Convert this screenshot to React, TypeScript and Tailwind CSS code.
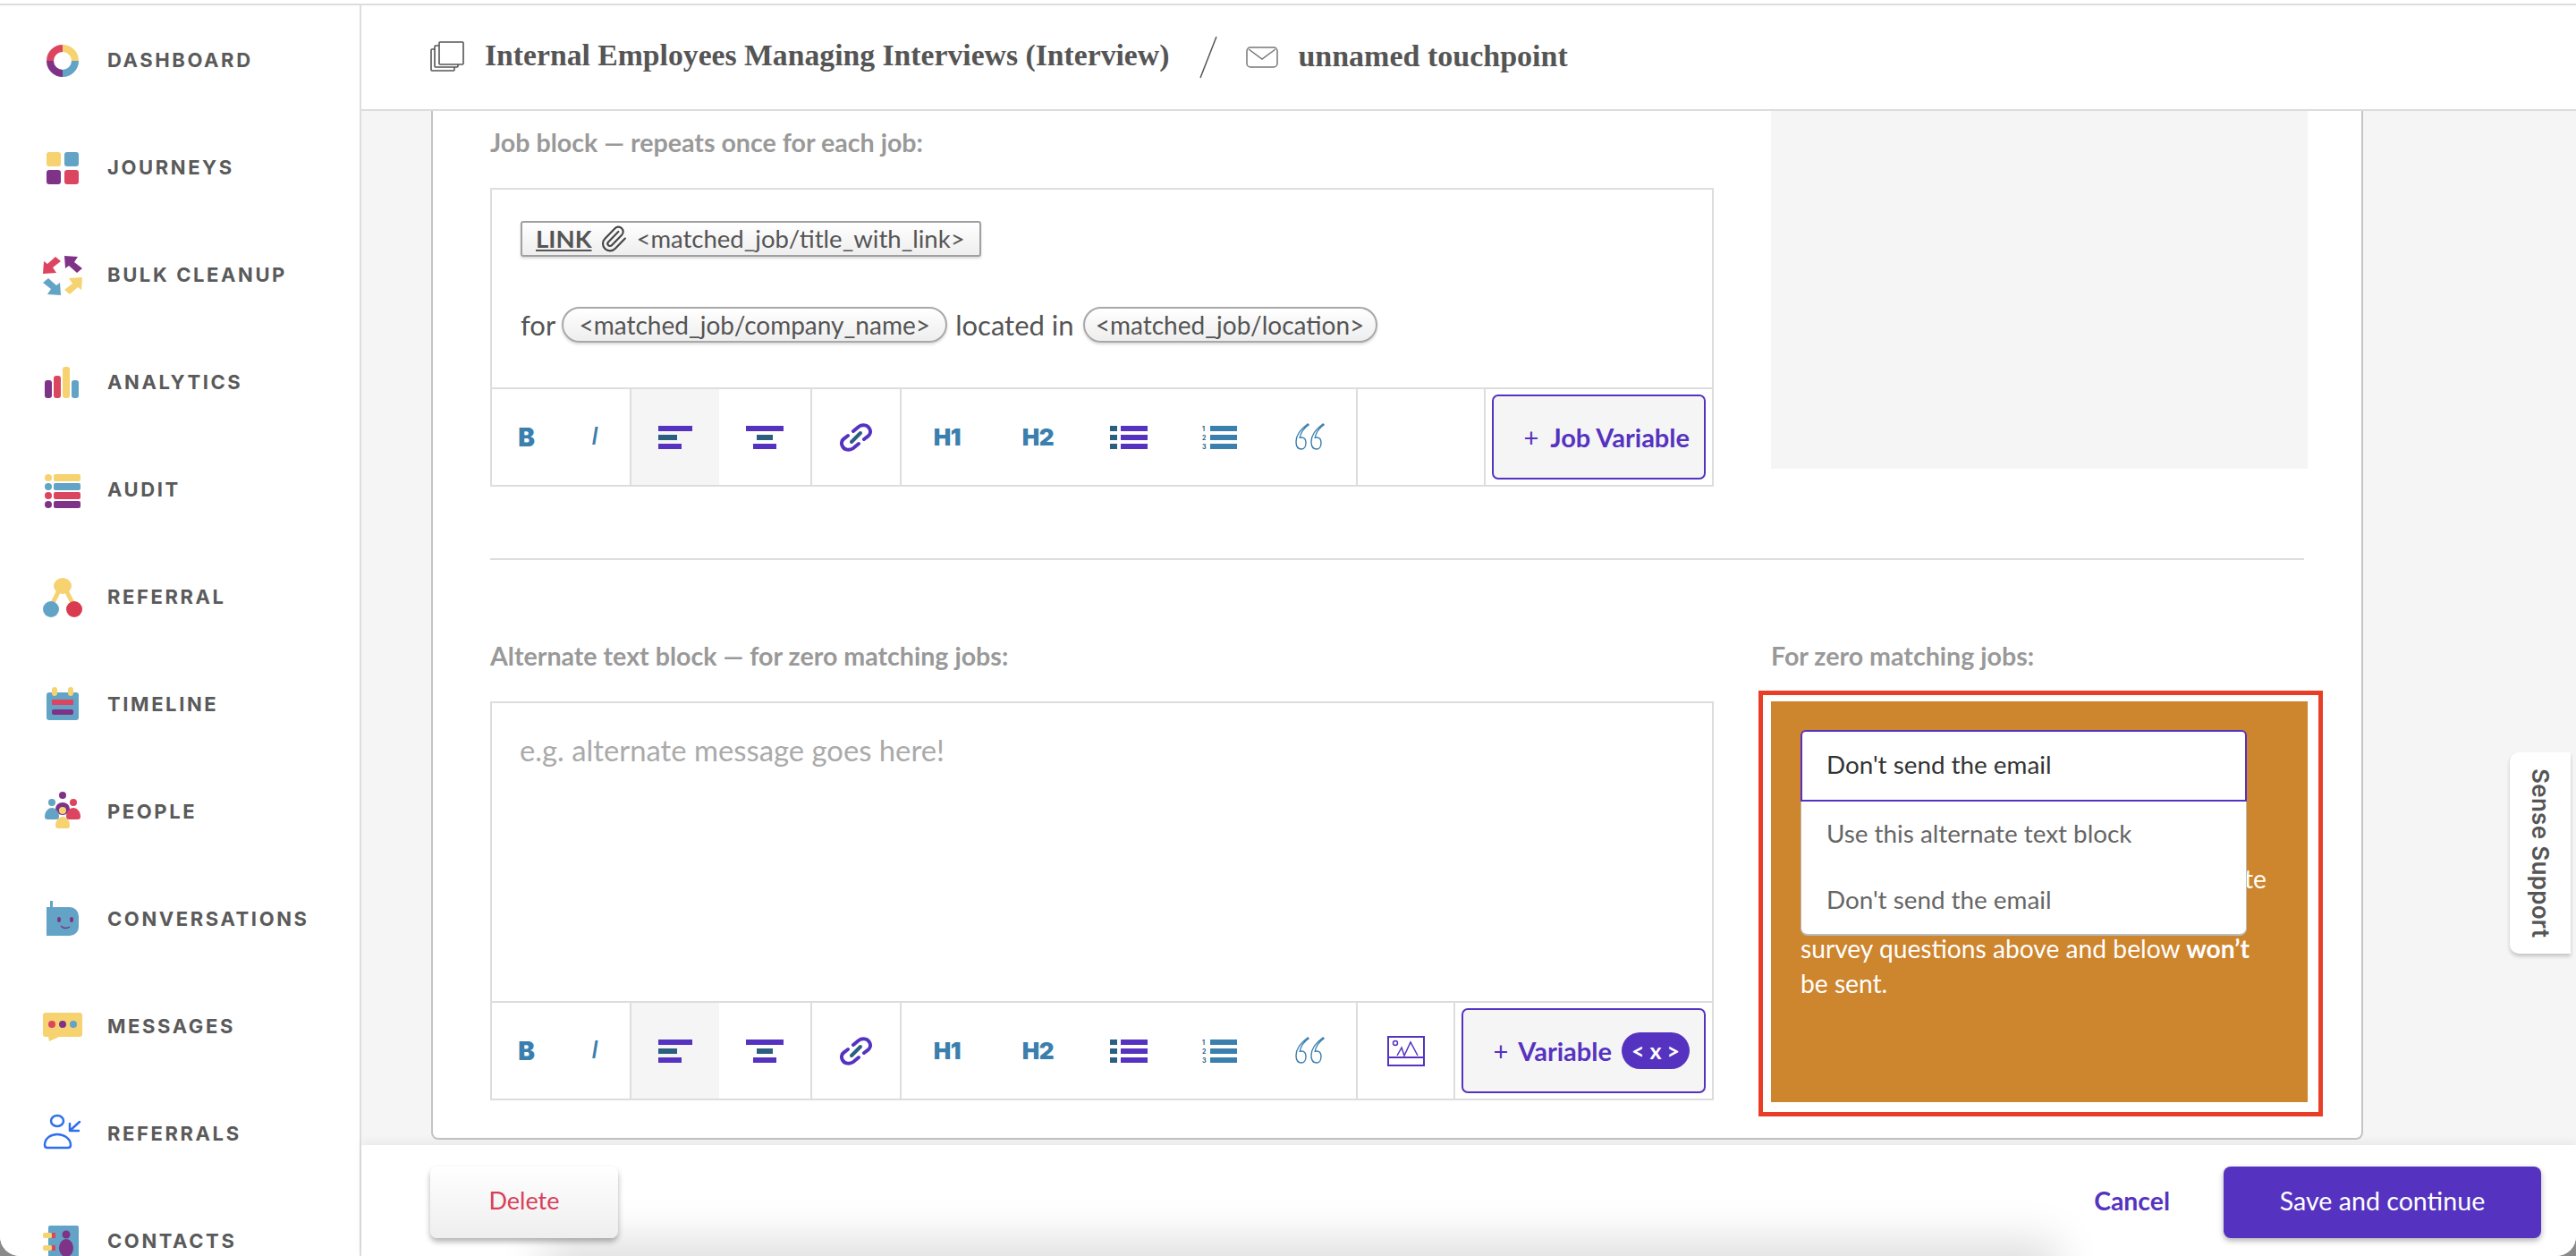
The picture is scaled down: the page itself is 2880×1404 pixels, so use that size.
import { Paperclip } from "lucide-react";
import type { ReactNode } from "react";

const yellow = "#f6d270";
const blue = "#62a3c6";
const purple = "#7f3386";
const red = "#dc4560";

const arrow = "0,20 1,6 5,9 14,1 20,6 11,13 15,19";

const navItems: { label: string; icon: ReactNode }[] = [
  {
    label: "DASHBOARD",
    icon: (
      <g fill="none" strokeWidth="8">
        <path d="M24 12 A14 14 0 0 1 38 26" stroke={yellow} />
        <path d="M38 26 A14 14 0 0 1 24 40" stroke={blue} />
        <path d="M24 40 A14 14 0 0 1 10 26" stroke={purple} />
        <path d="M10 26 A14 14 0 0 1 24 12" stroke={red} />
      </g>
    ),
  },
  {
    label: "JOURNEYS",
    icon: (
      <g>
        <rect x="6" y="8" width="16" height="16" rx="3" fill={yellow} />
        <rect x="26" y="8" width="16" height="16" rx="3" fill={blue} />
        <rect x="6" y="28" width="16" height="16" rx="3" fill={purple} />
        <rect x="26" y="28" width="16" height="16" rx="3" fill={red} />
      </g>
    ),
  },
  {
    label: "BULK CLEANUP",
    icon: (
      <g>
        <polygon points={arrow} fill={red} transform="translate(2 4)" />
        <polygon points={arrow} fill={purple} transform="translate(26 24) scale(1 -1)" />
        <polygon points={arrow} fill={blue} transform="translate(22 28) scale(-1 1)" />
        <polygon points={arrow} fill={yellow} transform="translate(46 48) scale(-1 -1)" />
      </g>
    ),
  },
  {
    label: "ANALYTICS",
    icon: (
      <g>
        <rect x="4" y="23" width="8" height="20" rx="3" fill={purple} />
        <rect x="14" y="18" width="8" height="25" rx="3" fill={red} />
        <rect x="24" y="8" width="8" height="35" rx="3" fill={yellow} />
        <rect x="34" y="23" width="8" height="20" rx="3" fill={blue} />
      </g>
    ),
  },
  {
    label: "AUDIT",
    icon: (
      <g>
        {[yellow, blue, red, purple].map((c, i) => (
          <g key={c} fill={c}>
            <ellipse cx="8" cy={12 + i * 10} rx="4" ry="4" />
            <rect x="14" y={8 + i * 10} width="30" height="8" rx="2" />
          </g>
        ))}
      </g>
    ),
  },
  {
    label: "REFERRAL",
    icon: (
      <g>
        <path d="M20 18 L13 32 M28 18 L35 32" stroke={yellow} strokeWidth="5" />
        <ellipse cx="24" cy="13" rx="10" ry="9" fill={yellow} />
        <ellipse cx="11" cy="39" rx="9" ry="9" fill={blue} />
        <ellipse cx="37" cy="39" rx="9" ry="9" fill="#d93a4e" />
      </g>
    ),
  },
  {
    label: "TIMELINE",
    icon: (
      <g>
        <rect x="6" y="12" width="36" height="31" rx="3" fill={blue} />
        <rect x="12" y="6" width="6" height="10" rx="3" fill={yellow} />
        <rect x="30" y="6" width="6" height="10" rx="3" fill={yellow} />
        <rect x="12" y="20" width="24" height="6" rx="1" fill={red} />
        <rect x="12" y="31" width="24" height="6" rx="2" fill={purple} />
      </g>
    ),
  },
  {
    label: "PEOPLE",
    icon: (
      <g>
        <circle cx="24" cy="7" r="4" fill={purple} />
        <circle cx="12" cy="15" r="4" fill={blue} />
        <circle cx="36" cy="15" r="4" fill={red} />
        <ellipse cx="24" cy="22" rx="8" ry="7" fill={purple} />
        <path d="M4 31 C4 24 9 21 12 21 C15 21 20 24 20 31 C20 33 19 34 17 34 H7 C5 34 4 33 4 31 Z" fill={blue} />
        <path d="M28 31 C28 24 33 21 36 21 C39 21 44 24 44 31 C44 33 43 34 41 34 H31 C29 34 28 33 28 31 Z" fill={red} />
        <circle cx="24" cy="24" r="4" fill={yellow} />
        <path d="M16 41 C16 34 21 31 24 31 C27 31 32 34 32 41 C32 43 31 44 29 44 H19 C17 44 16 43 16 41 Z" fill={yellow} />
      </g>
    ),
  },
  {
    label: "CONVERSATIONS",
    icon: (
      <g>
        <rect x="10" y="5" width="3" height="8" fill={blue} />
        <path d="M6 12 H32 a10 10 0 0 1 10 10 V34 a10 10 0 0 1 -10 10 H6 Z" fill={blue} />
        <ellipse cx="20" cy="26" rx="2" ry="3" fill={purple} />
        <ellipse cx="34" cy="26" rx="2" ry="3" fill={purple} />
        <path d="M22 33 C25 36 29 36 32 34" stroke={purple} strokeWidth="1.5" fill="none" />
      </g>
    ),
  },
  {
    label: "MESSAGES",
    icon: (
      <g>
        <path d="M5 10 H43 a3 3 0 0 1 3 3 V34 a3 3 0 0 1 -3 3 H20 L9 42 L8 37 H5 a3 3 0 0 1 -3 -3 V13 a3 3 0 0 1 3 -3 Z" fill={yellow} />
        <circle cx="12" cy="23" r="4" fill={red} />
        <circle cx="24" cy="23" r="4" fill={purple} />
        <circle cx="36" cy="23" r="4" fill={blue} />
      </g>
    ),
  },
  {
    label: "REFERRALS",
    icon: (
      <g fill="none" stroke="#2f6fed" strokeWidth="2.5" strokeLinecap="round" strokeLinejoin="round">
        <ellipse cx="18" cy="11" rx="7" ry="6" />
        <path d="M4 38 C4 31 10 26 18 26 C26 26 33 31 33 38 C33 40 32 41 30 41 H7 C5 41 4 40 4 38 Z" />
        <path d="M43 12 L32 22 M32 14 V22 H42" />
      </g>
    ),
  },
  {
    label: "CONTACTS",
    icon: (
      <g>
        <rect x="8" y="8" width="34" height="40" rx="2" fill={blue} />
        <circle cx="28" cy="18" r="4.5" fill={purple} />
        <ellipse cx="28" cy="33" rx="8" ry="10" fill={purple} />
        <rect x="2" y="16" width="10" height="6" rx="2" fill={yellow} />
        <rect x="12" y="16" width="4" height="6" fill={red} />
        <rect x="2" y="30" width="10" height="6" rx="2" fill={yellow} />
        <rect x="12" y="30" width="4" height="6" fill={red} />
      </g>
    ),
  },
];

function Sidebar() {
  return (
    <aside className="h-full w-[404px] shrink-0 overflow-hidden border-r-2 border-[#dddddd] bg-white">
      {navItems.map((item) => (
        <div key={item.label} className="flex h-[120px] items-center gap-[26px] pl-[46px]">
          <svg width="48" height="48" viewBox="0 0 48 48" className="shrink-0 overflow-visible">
            {item.icon}
          </svg>
          <span className="pt-[2px] font-['Inter',sans-serif] text-[22px] font-bold tracking-[2.6px] text-[#5a5a5a]">{item.label}</span>
        </div>
      ))}
    </aside>
  );
}

function Header() {
  return (
    <header className="flex h-[118px] shrink-0 items-center border-b-2 border-[#dddddd] bg-white pl-[77px]">
      <svg width="38" height="34" viewBox="0 0 38 34" fill="white" stroke="#555" strokeWidth="1.6" className="mt-[-3px]">
        <rect x="1" y="9" width="26" height="24" rx="1" />
        <rect x="5" y="5" width="26" height="24" rx="1" />
        <rect x="10" y="1" width="27" height="25" rx="1" />
      </svg>
      <span className="ml-[23px] pb-[3px] font-['Liberation_Serif',serif] text-[33.7px] font-bold text-[#555555]">
        Internal Employees Managing Interviews (Interview)
      </span>
      <svg width="22" height="48" viewBox="0 0 22 48" className="ml-[33px]">
        <line x1="20" y1="1" x2="2" y2="47" stroke="#555" strokeWidth="1.5" />
      </svg>
      <svg width="36" height="24" viewBox="0 0 36 24" fill="none" stroke="#777" strokeWidth="1.5" className="ml-[31px]">
        <rect x="1" y="1" width="34" height="22" rx="4" />
        <path d="M3 3 L18 14 L33 3" />
      </svg>
      <span className="ml-[22px] pb-[3px] font-['Liberation_Serif',serif] text-[34px] font-bold text-[#555555]">unnamed touchpoint</span>
    </header>
  );
}

function AlignLeftIcon() {
  return (
    <svg width="38" height="26" viewBox="0 0 38 26">
      <rect width="38" height="6" fill="#5533c0" />
      <rect y="10" width="21" height="6" fill="#2b5f80" />
      <rect y="20" width="26" height="6" fill="#5533c0" />
    </svg>
  );
}

function AlignCenterIcon() {
  return (
    <svg width="42" height="26" viewBox="0 0 42 26">
      <rect width="42" height="6" fill="#5533c0" />
      <rect x="12" y="10" width="18" height="6" fill="#2b5f80" />
      <rect x="8" y="20" width="26" height="6" fill="#5533c0" />
    </svg>
  );
}

function LinkIcon() {
  return (
    <svg width="38" height="32" viewBox="0 0 38 32" fill="none">
      <g strokeWidth="4" stroke="#5533c0" strokeLinecap="round">
        <path d="M16 9 L22 4 C26 1 32 2 34 6 C36 9 35 13 32 15 L28 18" />
        <path d="M22 23 L16 28 C12 31 6 30 4 26 C2 23 3 19 6 17 L10 14" />
      </g>
      <path d="M14 21 L24 11" stroke="#2b5f80" strokeWidth="4" strokeLinecap="round" />
    </svg>
  );
}

function BulletsIcon() {
  return (
    <svg width="42" height="26" viewBox="0 0 42 26">
      {[0, 10, 20].map((y) => (
        <g key={y}>
          <rect y={y} width="8" height="6" fill="#2b5f80" />
          <rect x="12" y={y} width="30" height="6" fill="#5533c0" />
        </g>
      ))}
    </svg>
  );
}

function NumbersIcon() {
  return (
    <svg width="40" height="28" viewBox="0 0 40 28">
      {[0, 10, 20].map((y, i) => (
        <g key={y}>
          <text x="0" y={y + 7} fontSize="7" fontWeight="700" fontFamily="Inter, sans-serif" fill="#2b5f80">
            {i + 1}
          </text>
          <rect x="9" y={y + 1} width="30" height="6" fill="#3a7fad" />
        </g>
      ))}
    </svg>
  );
}

function QuoteIcon() {
  const d = "M15 1 C8 6 2 13 2 21 C2 26 4 29 8 29 C11 29 13 26 13 22 C13 18 11 16 8 16 C7 16 6 16 6 17 C7 11 10 6 16 2 Z";
  return (
    <svg width="36" height="31" viewBox="0 0 36 31" fill="none" stroke="#3a7fad" strokeWidth="1.4">
      <path d={d} />
      <path d={d} transform="translate(17 0)" />
    </svg>
  );
}

function ImageIcon() {
  return (
    <svg width="42" height="34" viewBox="0 0 42 34" fill="none" stroke="#5533c0" strokeWidth="2">
      <rect x="1" y="1" width="40" height="32" />
      <line x1="1" y1="24" x2="41" y2="24" />
      <circle cx="9" cy="8" r="2.5" strokeWidth="1.5" />
      <path d="M11 22 L16 13 L19 22 L26 7 L34 22" strokeWidth="1.5" />
    </svg>
  );
}

function ToolCell({ children, className = "" }: { children: ReactNode; className?: string }) {
  return <div className={`flex h-full items-center justify-center ${className}`}>{children}</div>;
}

function Toolbar({ hasImage, children }: { hasImage?: boolean; children: ReactNode }) {
  const headingClass = "font-['Inter',sans-serif] text-[26px] font-black tracking-[-0.5px] text-[#3a7fad]";
  return (
    <div className="flex h-[109px] shrink-0 items-stretch border-t-2 border-[#dddddd] font-['Inter',sans-serif]">
      <div className="flex w-[156px] border-r-2 border-[#dddddd]">
        <ToolCell className="w-[77px]">
          <span className="text-[28px] font-black text-[#3a7fad]">B</span>
        </ToolCell>
        <ToolCell className="w-[76px]">
          <span className="text-[27px] font-medium italic text-[#3a7fad]">I</span>
        </ToolCell>
      </div>
      <ToolCell className="w-[98px] bg-[#f5f5f5]">
        <AlignLeftIcon />
      </ToolCell>
      <ToolCell className="w-[104px] border-r-2 border-[#dddddd]">
        <AlignCenterIcon />
      </ToolCell>
      <ToolCell className="w-[100px] border-r-2 border-[#dddddd]">
        <LinkIcon />
      </ToolCell>
      <div className="flex w-[510px] border-r-2 border-[#dddddd]">
        <ToolCell className="w-[102px]">
          <span className={headingClass}>H1</span>
        </ToolCell>
        <ToolCell className="w-[102px]">
          <span className={headingClass}>H2</span>
        </ToolCell>
        <ToolCell className="w-[102px]">
          <BulletsIcon />
        </ToolCell>
        <ToolCell className="w-[102px]">
          <NumbersIcon />
        </ToolCell>
        <ToolCell className="w-[102px]">
          <QuoteIcon />
        </ToolCell>
      </div>
      {hasImage ? (
        <ToolCell className="w-[109px] border-r-2 border-[#dddddd]">
          <ImageIcon />
        </ToolCell>
      ) : (
        <div className="w-[143px] border-r-2 border-[#dddddd]" />
      )}
      <div className="flex-1 px-[7px] py-[6px]">{children}</div>
    </div>
  );
}

function VariableButton({ children }: { children: ReactNode }) {
  return (
    <div className="flex h-full items-center justify-end gap-[13px] rounded-[7px] border-2 border-[#5533c0] bg-[#f5f5f5] pr-[16px] font-['Lato',sans-serif] text-[29px] font-bold text-[#5533c0]">
      {children}
    </div>
  );
}

function Label({ children }: { children: ReactNode }) {
  return <p className="h-[36px] font-['Lato',sans-serif] text-[28.6px] font-bold leading-[34px] text-[#999999]">{children}</p>;
}

function JobEditor() {
  const chipText = "font-['Lato',sans-serif] text-[#555555]";
  const pill = `flex h-[40px] items-center justify-center rounded-full border-2 border-[#a8a8a8] bg-gradient-to-b from-white to-[#eeeeee] text-[28px] shadow-[0_2px_3px_rgba(0,0,0,0.15)] ${chipText}`;
  return (
    <div className="flex h-[334px] flex-col border-2 border-[#dddddd] bg-white">
      <div className="flex-1 pl-[32px] pt-[35px]">
        <span className={`inline-flex h-[40px] w-[515px] items-center gap-[9px] rounded-[3px] border-2 border-[#a0a0a0] bg-gradient-to-b from-white to-[#eeeeee] pl-[15px] text-[27.5px] shadow-[0_2px_3px_rgba(0,0,0,0.15)] ${chipText}`}>
          <span className="font-bold underline">LINK</span>
          <Paperclip size={32} strokeWidth={1.6} className="text-[#444444]" />
          <span>&lt;matched_job/title_with_link&gt;</span>
        </span>
        <div className="mt-[56px] flex h-[40px] items-center font-['Lato',sans-serif] text-[31px] leading-[40px] text-[#555555]">
          <span>for</span>
          <span className={`ml-[7px] w-[431px] ${pill}`}>&lt;matched_job/company_name&gt;</span>
          <span className="ml-[9px]">located in</span>
          <span className={`ml-[10px] w-[329px] ${pill}`}>&lt;matched_job/location&gt;</span>
        </div>
      </div>
      <Toolbar>
        <VariableButton>
          <span className="font-normal">+</span>
          <span>Job Variable</span>
        </VariableButton>
      </Toolbar>
    </div>
  );
}

function AlternateEditor() {
  return (
    <div className="flex h-[446px] flex-col border-2 border-[#dddddd] bg-white">
      <div className="flex-1 pl-[31px] pt-[35px] font-['Lato',sans-serif] text-[32.8px] leading-[36px] text-[#aaaaaa]">
        e.g. alternate message goes here!
      </div>
      <Toolbar hasImage>
        <VariableButton>
          <span className="font-normal">+</span>
          <span className="-ml-[2px]">Variable</span>
          <span className="-ml-[2px] flex h-[41px] w-[76px] items-center justify-center rounded-full bg-[#5533c0] text-[25px] text-white">&lt; x &gt;</span>
        </VariableButton>
      </Toolbar>
    </div>
  );
}

function ZeroJobsPanel() {
  return (
    <div className="relative h-[448px] bg-[#cd852e] pl-[33px] pt-[179px] font-['Lato',sans-serif] text-[28.2px] leading-[39px] text-white">
      <div className="pointer-events-none absolute -bottom-[16px] -left-[14px] -right-[17px] -top-[12px] border-[5px] border-[#e93e26]" />
      <p className="w-[521px]">
        <span className="block text-right">te</span>
        <br />
        survey questions above and below <b>won’t</b> be sent.
      </p>
      <div className="absolute left-[33px] top-[32px] w-[499px] text-[27.8px]">
        <div className="flex h-[80px] items-center rounded-t-[6px] border-2 border-[#5533c0] bg-white pb-[4px] pl-[27px] text-[#333333]">Don't send the email</div>
        <div className="rounded-b-[8px] border-x border-b-2 border-[#bbbbbb] bg-white pl-[28px] text-[#666666]">
          <div className="flex h-[74px] items-center pb-[4px]">Use this alternate text block</div>
          <div className="flex h-[74px] items-center pb-[4px]">Don't send the email</div>
        </div>
      </div>
    </div>
  );
}

function Card() {
  return (
    <section className="ml-[78px] w-[2160px] rounded-b-[8px] border-x-2 border-b-2 border-[#c4c4c4] bg-white pb-[40px] pl-[64px]">
      <div className="flex gap-[64px]">
        <div className="w-[1368px] pt-[18px]">
          <Label>Job block — repeats once for each job:</Label>
          <div className="mt-[32px]">
            <JobEditor />
          </div>
        </div>
        <div className="h-[400px] w-[600px] bg-[#f5f5f5]" />
      </div>
      <div className="mt-[80px] h-[2px] w-[2028px] bg-[#dddddd]" />
      <div className="mt-[90px] flex gap-[64px]">
        <div className="w-[1368px]">
          <Label>Alternate text block — for zero matching jobs:</Label>
          <div className="mt-[32px]">
            <AlternateEditor />
          </div>
        </div>
        <div className="w-[600px]">
          <Label>For zero matching jobs:</Label>
          <div className="mt-[32px]">
            <ZeroJobsPanel />
          </div>
        </div>
      </div>
    </section>
  );
}

function Footer() {
  return (
    <footer className="relative flex h-[124px] shrink-0 items-start justify-between overflow-hidden bg-white pl-[77px] pr-[39px] pt-[24px] font-['Lato',sans-serif] shadow-[0_-4px_10px_rgba(0,0,0,0.05)]">
      <div className="absolute -bottom-[30px] left-[220px] h-[30px] w-[1660px] shadow-[0_0_50px_16px_#dcdcdc]" />
      <button className="relative h-[80px] w-[210px] rounded-[8px] bg-gradient-to-b from-white to-[#eeeeee] pb-[3px] text-[27px] text-[#d8405a] shadow-[0_4px_6px_rgba(0,0,0,0.3)]">Delete</button>
      <div className="relative flex items-center gap-[60px]">
        <span className="pb-[3px] text-[28.4px] font-bold text-[#5533c0]">Cancel</span>
        <button className="h-[80px] w-[355px] rounded-[8px] bg-[#5533c0] pb-[3px] text-[28.6px] text-white shadow-[0_3px_6px_rgba(0,0,0,0.3)]">Save and continue</button>
      </div>
    </footer>
  );
}

export default function App() {
  return (
    <div className="relative h-[1404px] w-[2880px] overflow-hidden bg-[#8a8a8a]">
      <div className="flex h-full flex-col overflow-hidden rounded-b-[22px] bg-white pt-[4px]">
        <div className="h-[2px] shrink-0 bg-[#dddddd]" />
        <div className="flex min-h-0 flex-1">
          <Sidebar />
          <div className="flex min-w-0 flex-1 flex-col">
            <Header />
            <main className="min-h-0 flex-1 overflow-hidden bg-[#f5f5f5]">
              <Card />
            </main>
            <Footer />
          </div>
        </div>
      </div>
      <div className="absolute left-[2806px] top-[841px] flex h-[225px] w-[68px] items-center justify-center rounded-l-[10px] bg-white font-['Inter',sans-serif] text-[26px] font-semibold tracking-[0.3px] text-[#555555] shadow-[0_3px_4px_rgba(0,0,0,0.2)] [writing-mode:vertical-rl]">
        Sense Support
      </div>
    </div>
  );
}
